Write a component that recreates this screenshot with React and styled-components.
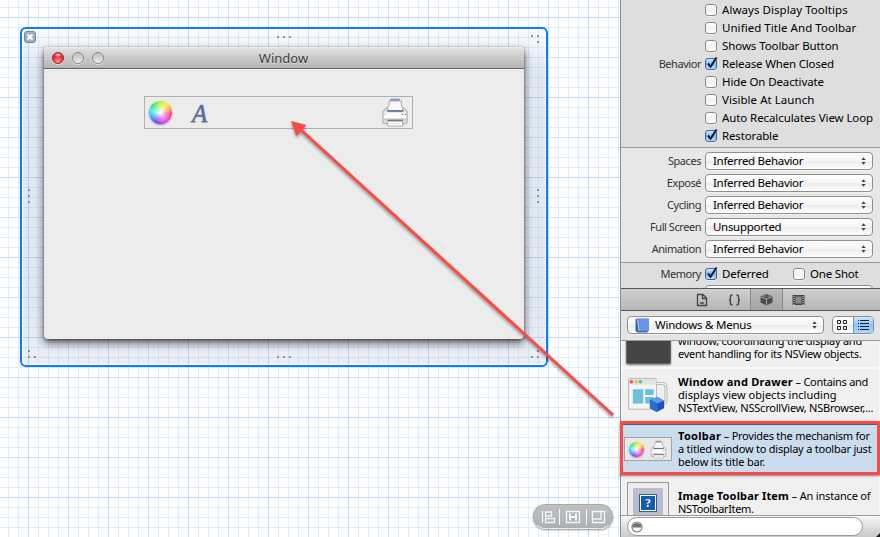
import React from "react";
import styled, { createGlobalStyle, css } from "styled-components";

const Global = createGlobalStyle`
  *, *::before, *::after { box-sizing: border-box; }
  body { margin: 0; overflow: hidden; font-family: "Noto Sans", "Open Sans", sans-serif; font-size: 11.5px; color: #000; }
  svg { display: block; flex: none; }
`;

const Screen = styled.div`
  position: relative;
  display: flex;
  width: 880px;
  height: 537px;
  overflow: hidden;
`;

/* ---------- canvas ---------- */
const Canvas = styled.main`
  position: relative;
  flex: 1;
  background-color: #fff;
  background-image:
    linear-gradient(90deg, #bdd9fc 1px, transparent 1px),
    linear-gradient(#bdd9fc 1px, transparent 1px),
    linear-gradient(90deg, #cde2fd 1px, transparent 1px),
    linear-gradient(#cde2fd 1px, transparent 1px),
    linear-gradient(90deg, #dfedfe 1px, transparent 1px),
    linear-gradient(#dfedfe 1px, transparent 1px);
  background-size: 80px 80px, 80px 80px, 40px 40px, 40px 40px, 10px 10px, 10px 10px;
  background-position: 28px 17px;
`;

const Selection = styled.section`
  position: absolute;
  left: 20px;
  top: 27px;
  width: 528px;
  height: 340px;
  border: 2px solid #0f78fb;
  border-radius: 6px;
  box-shadow: inset 0 0 0 1px #fff, 0 0 1px #8abcf5;
  background: linear-gradient(rgba(170, 190, 215, 0.05) 0, rgba(160, 180, 208, 0.3) 40px, rgba(160, 180, 208, 0.3) 270px, rgba(160, 175, 200, 0.2) 100%);
`;

const CloseBadge = styled.div`
  position: absolute;
  left: 2px;
  top: 2px;
  width: 12px;
  height: 12px;
  border: 1px solid #71849f;
  border-radius: 3px;
  background: #9fb0c9;
  display: grid;
  place-items: center;
`;

const Grip = styled.svg`
  position: absolute;
  left: ${(p) => p.$x}px;
  top: ${(p) => p.$y}px;
  fill: #858b94;
`;

const AppWindow = styled.div`
  position: absolute;
  left: 22px;
  top: 18px;
  width: 480px;
  height: 292px;
  display: flex;
  flex-direction: column;
  border-radius: 4px;
  background: #ececec;
  box-shadow: 0 4px 8px rgba(0, 0, 0, 0.62), 0 1px 3px rgba(0, 0, 0, 0.4);
`;

const TitleBar = styled.header`
  position: relative;
  display: flex;
  align-items: center;
  gap: 8px;
  height: 22px;
  padding: 0 8px;
  border-radius: 4px 4px 0 0;
  border-bottom: 1px solid #666;
  background: linear-gradient(#f1f1f1 0, #dedede 2px, #b4b4b4);
`;

const Light = styled.i`
  width: 12px;
  height: 12px;
  border-radius: 50%;
  border: 1px solid ${(p) => (p.$red ? "#9c2a31" : "#8b8b8b")};
  background: ${(p) =>
    p.$red
      ? "radial-gradient(ellipse 4px 2.3px at 50% 18%, #ffd7d9 0, transparent 100%), radial-gradient(circle at 50% 85%, #ff9aa0 0, #f2303c 50%, #c4101f 100%)"
      : "linear-gradient(#bfbfbf, #d2d2d2 45%, #ececec)"};
  box-shadow: 0 1px 0 rgba(255, 255, 255, 0.5);
`;

const Title = styled.h1`
  flex: 1;
  margin: 0 61px 0 0;
  text-align: center;
  font-size: 13px;
  font-weight: 400;
  line-height: 20px;
  color: #3d3d3d;
  text-shadow: 0 1px 0 rgba(255, 255, 255, 0.5);
`;

const ToolbarPreview = styled.div`
  display: flex;
  align-items: center;
  width: 269px;
  height: 33px;
  margin: 27px 0 0 100px;
  padding: 0 3px 0 4px;
  border: 1px solid #b0b0b0;
`;

const Wheel = styled.i`
  flex: none;
  width: ${(p) => p.$d}px;
  height: ${(p) => p.$d}px;
  border-radius: 50%;
  background:
    radial-gradient(circle, #fff 0, rgba(255, 255, 255, 0.62) 25%, rgba(255, 255, 255, 0) 66%),
    conic-gradient(#b8f53c, #ffee38 35deg, #ffab4a 65deg, #ff466b 95deg, #ff38cc 130deg, #df3cf8 165deg, #6b45f4 205deg, #3bb1fb 250deg, #35efe3 280deg, #37e768 315deg, #b8f53c);
  box-shadow: 0 1px 2px rgba(80, 80, 100, 0.5);
`;

const FontGlyph = styled.span`
  flex: 1;
  margin-left: 20px;
  padding-top: 2px;
  font: italic 400 25px/29px "Liberation Serif", serif;
  color: #5f6f9b;
  -webkit-text-stroke: 0.5px #5f6f9b;
  text-shadow: 0 1px 1px #bbb;
`;

const AlignBar = styled.nav`
  position: absolute;
  left: 533px;
  top: 504px;
  width: 80px;
  height: 25px;
  display: flex;
  align-items: center;
  justify-content: center;
  border: 1px solid #a4a9ae;
  border-bottom-color: #eee;
  border-radius: 13px;
  background: linear-gradient(rgba(184, 187, 190, 0.9), rgba(164, 168, 173, 0.9));
  box-shadow: 0 1px 2px rgba(0, 0, 0, 0.45);
`;

/* ---------- inspector ---------- */
const Panel = styled.aside`
  display: flex;
  flex-direction: column;
  width: 260px;
  border-left: 1px solid #8f8f8f;
  background: #dedede;
`;

const Group = styled.section`
  height: ${(p) => p.$h}px;
  padding-top: ${(p) => p.$pad || 0}px;
  background: ${(p) => (p.$light ? "#e7e7e7" : "#dedede")};
  border-top: ${(p) => (p.$first ? "none" : "1px solid #999")};
  overflow: hidden;
  flex: none;
`;

const Row = styled.div`
  display: grid;
  grid-template-columns: 80px 1fr;
  column-gap: 4px;
  align-items: center;
  height: ${(p) => p.$h}px;
  white-space: nowrap;
`;

const Label = styled.span`
  padding-bottom: 1px;
  text-align: right;
  color: #333;
  font-size: 11px;
  letter-spacing: -0.45px;
`;

const Options = styled.div`
  display: flex;
  align-items: center;
`;

const CheckLabel = styled.label`
  display: flex;
  align-items: center;
  gap: 5px;
  width: ${(p) => (p.$w ? p.$w + "px" : "auto")};
  letter-spacing: ${(p) => p.$ls || 0}px;
`;

const Caption = styled.span`
  line-height: 16px;
`;

const Box = styled.span`
  display: block;
  width: 12px;
  height: 12px;
  border: 1px solid ${(p) => (p.$on ? "#4e5d93" : "#8b8b8b")};
  border-radius: 3px;
  background: ${(p) => (p.$on ? "linear-gradient(#d3e8fb, #79b5ef 50%, #b3e1ff)" : "linear-gradient(#fff, #f1f1f1 50%, #fff)")};
  box-shadow: 0 1px 0 rgba(255, 255, 255, 0.4);
`;

const Tick = styled.svg`
  overflow: visible;
`;

const popup = css`
  display: flex;
  align-items: center;
  border: 1px solid #8f8f8f;
  border-radius: 4px;
  background: linear-gradient(#fff, #f6f6f6 50%, #ececec 52%, #fff);
  box-shadow: 0 1px 0 rgba(255, 255, 255, 0.5);
`;

const Select = styled.div`
  ${popup}
  width: 168px;
  height: 18px;
  padding: 0 6px 0 7px;
  letter-spacing: -0.3px;
  justify-content: space-between;
`;

const TabBar = styled.nav`
  display: grid;
  grid-template-columns: 32px 32px 32px 32px;
  justify-content: center;
  height: 23px;
  flex: none;
  border-top: 1px solid #555;
  border-bottom: 1px solid #555;
  background: linear-gradient(#d0d0d0, #b5b5b5);
`;

const Tab = styled.div`
  display: grid;
  place-items: center;
  border: solid ${(p) => (p.$active ? "#8a8a8a" : "transparent")};
  border-width: 0 1px;
  margin-left: -1px;
  background: ${(p) => (p.$active ? "linear-gradient(#bababa, #a5a5a5)" : "none")};
`;

const FilterBar = styled.div`
  display: flex;
  align-items: center;
  justify-content: space-between;
  height: 30px;
  flex: none;
  padding: 0 6px 1px;
  border-bottom: 1px solid #999;
  background: #e4e4e4;
`;

const Library = styled.div`
  ${popup}
  width: 197px;
  height: 18px;
  padding: 0 6px 0 7px;
  letter-spacing: -0.25px;
`;

const LibraryName = styled.span`
  flex: 1;
  margin-left: 5px;
  line-height: 15px;
  padding-bottom: 1px;
`;

const Segments = styled.div`
  ${popup}
  width: 42px;
  height: 18px;
  overflow: hidden;
`;

const Segment = styled.div`
  flex: 1;
  height: 16px;
  display: grid;
  place-items: center;
  background: ${(p) => (p.$on ? "linear-gradient(#d2e7fb, #8bc1f4 50%, #a9dafd)" : "none")};
  border-left: ${(p) => (p.$on ? "1px solid #7392bd" : "none")};
`;

const List = styled.div`
  display: flex;
  flex-direction: column;
  justify-content: flex-start;
  gap: 2px;
  height: 174px;
  flex: none;
  overflow: hidden;
  padding: 0 1px;
  background: #fafafa;
`;

const Item = styled.article`
  display: grid;
  grid-template-columns: 56px 1fr;
  align-items: start;
  height: 52px;
  flex: none;
  margin-top: ${(p) => p.$shift || 0}px;
  border-radius: 4px;
  background: ${(p) => (p.$selected ? "#ccdcef" : "#f0f0f0")};
`;

const Thumb = styled.div`
  display: flex;
  align-items: center;
  justify-content: center;
  height: 52px;
  padding-right: 4px;
`;

const Copy = styled.p`
  margin: 0;
  padding-top: ${(p) => p.$top || 6}px;
  font-size: 11px;
  line-height: 13px;
`;

const Line = styled.span`
  display: block;
  white-space: nowrap;
  letter-spacing: ${(p) => p.$ls || 0}px;

  b { letter-spacing: ${(p) => p.$bold || 0}px; }
`;

const MiniToolbar = styled.div`
  display: flex;
  align-items: center;
  justify-content: space-between;
  width: 48px;
  height: 24px;
  padding: 0 4px;
  border: 1px solid #a4a4a4;
  background: #e9e9e9;
`;

const DarkView = styled.div`
  width: 45px;
  height: 45px;
  border: 1px solid #666;
  border-radius: 2px;
  background: #444;
  box-shadow: 0 1px 2px #777;
`;

const ImageFrame = styled.div`
  flex: none;
  display: grid;
  place-items: center;
  width: 42px;
  height: 42px;
  border: 1px solid #999;
  background: #ededed;
`;

const ImageWell = styled.div`
  display: grid;
  place-items: center;
  width: 30px;
  height: 31px;
  background: #bcbcca;

  b {
    width: 16px;
    height: 16px;
    border: 1px solid #fff;
    outline: 1px solid #2663a8;
    background: #1459ab;
    color: #fff;
    font: bold 12px/14px "Liberation Serif", serif;
    text-align: center;
  }
`;

const SearchBar = styled.footer`
  position: relative;
  flex: 1;
  padding: 1px 6px;
  border-top: 1px solid #999;
  background: linear-gradient(#f8f8f8, #c9c9c9);
`;

const SearchField = styled.div`
  width: 236px;
  height: 19px;
  display: flex;
  align-items: center;
  padding-left: 3px;
  border: 1px solid #999;
  border-radius: 10px;
  background: #fff;
`;

const Highlight = styled.div`
  position: absolute;
  left: 620px;
  top: 421px;
  width: 260px;
  height: 54px;
  border: 3px solid #fb4b45;
  box-shadow: 0 1px 2px rgba(0, 0, 0, 0.5), inset 0 1px 0 #3f5f8f;
`;

const Arrow = styled.svg`
  position: absolute;
  left: 0;
  top: 0;
  filter: drop-shadow(0 2px 1.5px rgba(0, 0, 0, 0.4));
`;

const Corner = styled.svg`
  position: absolute;
  right: 0;
  bottom: 0;
`;

function Printer({ w, h }) {
  return (
    <svg width={w} height={h} viewBox="0 0 28 30">
      <path d="M9.500 1h9v3h-9z" fill="#8fa6cf" stroke="#7f93ba" strokeWidth=".7" />
      <path d="M4.500 10.500h19L26.500 14V25q0 1.500-1.500 1.500H3Q1.500 26.500 1.500 25V14z" fill="#dcdcdc" stroke="#a0a0a0" strokeWidth=".9" />
      <path d="M6.500 13V9.500L8 7.500V3H20.500V7.500L22 9.500V13z" fill="#f9f9f9" stroke="#909090" strokeWidth=".8" />
      <path d="M6 12.500h16.500v1.800H6z" fill="#637698" />
      <path d="M2.500 15h23v6h-23z" fill="#fbfbfb" />
      <path d="M2.500 21.500h23V23h-23z" fill="#c8c8c8" />
      <path d="M6.500 22.500h15.500V24H6.500z" fill="#707070" />
      <path d="M6.500 24h15.500v5H6.500z" fill="#fff" stroke="#999" strokeWidth=".8" />
      <path d="M8.500 26.500h11" stroke="#ccc" strokeWidth=".7" />
      <path d="M3 17h1.500" stroke="#e6b13a" />
      <path d="M21 17h1.500M24 17h1.500" stroke="#555" />
    </svg>
  );
}

function Chevrons() {
  return (
    <svg width="5" height="8" viewBox="0 0 5 8" fill="#444">
      <path d="M.3 3h4.400L2.500 .2zM.3 5h4.400L2.500 7.800z" />
    </svg>
  );
}

function Check({ on, w, ls, children }) {
  return (
    <CheckLabel $w={w} $ls={ls}>
      <Box $on={on}>
        {on && (
          <Tick width="10" height="10" viewBox="0 0 10 10">
            <path d="M2 4.500 4.500 7.800 10.500 -1.500" fill="none" stroke="#101b36" strokeWidth="2" />
          </Tick>
        )}
      </Box>
      <Caption>{children}</Caption>
    </CheckLabel>
  );
}

const dots = {
  h: [[0, 1], [6, 1], [12, 1]],
  v: [[1, 0], [1, 6], [1, 12]],
  tr: [[0, 0], [6, 0], [6, 6]],
  bl: [[0, 0], [0, 6], [6, 6]],
  br: [[6, 0], [0, 6], [6, 6]],
};

function Dots({ kind, x, y }) {
  return (
    <Grip $x={x} $y={y} width="15" height="15" viewBox="0 0 15 15">
      {dots[kind].map(([cx, cy]) => (
        <rect key={`${cx}-${cy}`} x={cx} y={cy} width="2" height="2" rx=".6" />
      ))}
    </Grip>
  );
}

const checks = [
  ["Always Display Tooltips", false, 0.05],
  ["Unified Title And Toolbar", false, 0.05],
  ["Shows Toolbar Button", false, -0.09],
  ["Release When Closed", true, -0.17],
  ["Hide On Deactivate", false, -0.12],
  ["Visible At Launch", false, 0.04],
  ["Auto Recalculates View Loop", false, -0.09],
  ["Restorable", true, -0.15],
];

const behaviors = [
  ["Spaces", "Inferred Behavior"],
  ["Exposé", "Inferred Behavior"],
  ["Cycling", "Inferred Behavior"],
  ["Full Screen", "Unsupported"],
  ["Animation", "Inferred Behavior"],
];

export default function App() {
  return (
    <Screen>
      <Global />
      <Canvas>
        <Selection>
          <CloseBadge>
            <svg width="8" height="8" viewBox="0 0 8 8">
              <path d="M1.500 1.500l5 5M6.500 1.500l-5 5" stroke="#fff" strokeWidth="2" />
            </svg>
          </CloseBadge>
          <Dots kind="h" x={255} y={6} />
          <Dots kind="h" x={255} y={326} />
          <Dots kind="v" x={5} y={160} />
          <Dots kind="v" x={514} y={160} />
          <Dots kind="tr" x={509} y={6} />
          <Dots kind="bl" x={6} y={321} />
          <Dots kind="br" x={509} y={321} />
          <AppWindow>
            <TitleBar>
              <Light $red />
              <Light />
              <Light />
              <Title>Window</Title>
            </TitleBar>
            <ToolbarPreview>
              <Wheel $d={23} />
              <FontGlyph>A</FontGlyph>
              <Printer w={28} h={29} />
            </ToolbarPreview>
          </AppWindow>
        </Selection>
        <AlignBar>
          <svg width="68" height="18" viewBox="0 0 68 18" fill="none" stroke="#f6f6f6" strokeWidth="1.300">
            <path d="M3.500 3v12M6.500 4h6v4h-6zM6.500 10.500h9v4h-9z" />
            <path d="M20.500 1v16M47.500 1v16" strokeWidth="1" />
            <path d="M27.500 3.500h13v11h-13z" />
            <path d="M31 5.500v7M37 5.500v7M31 9h6" strokeWidth="2" />
            <path d="M53.500 3.500h12v11h-12zM53.500 11h8.500V3.500" />
          </svg>
        </AlignBar>
      </Canvas>

      <Panel>
        <Group $first $h={147} $pad={1}>
          {checks.map(([text, on, ls], i) => (
            <Row key={text} $h={18}>
              <Label>{i === 3 ? "Behavior" : ""}</Label>
              <Check on={on} ls={ls}>{text}</Check>
            </Row>
          ))}
        </Group>
        <Group $light $h={115} $pad={2}>
          {behaviors.map(([label, value]) => (
            <Row key={label} $h={22}>
              <Label>{label}</Label>
              <Select>
                <Caption>{value}</Caption>
                <Chevrons />
              </Select>
            </Row>
          ))}
        </Group>
        <Group $h={26} $pad={2}>
          <Row $h={18}>
            <Label>Memory</Label>
            <Options>
              <Check on w={88} ls={-0.2}>Deferred</Check>
              <Check ls={-0.2}>One Shot</Check>
            </Options>
          </Row>
          <Row $h={22}>
            <Label />
            <Select />
          </Row>
        </Group>
        <TabBar>
          <Tab>
            <svg width="12" height="14" viewBox="0 0 12 14" fill="none" stroke="#444" strokeWidth="1.300">
              <path d="M1.500 1.500H7l3.500 3.500v7.500h-9zM6.500 2v3.500H10M4 10h4" />
            </svg>
          </Tab>
          <Tab>
            <svg width="13" height="12" viewBox="0 0 13 12" fill="none" stroke="#444" strokeWidth="1.400">
              <path d="M4.500 1Q2.500 1 2.500 2.500v2Q2.500 6 1 6q1.500 0 1.500 1.500v2Q2.500 11 4.500 11M8.500 1q2 0 2 1.500v2Q10.500 6 12 6q-1.500 0-1.500 1.500v2q0 1.500-2 1.500" />
            </svg>
          </Tab>
          <Tab $active>
            <svg width="13" height="13" viewBox="0 0 13 13">
              <path d="M.5 3.500 6.500 1l6 2.500v6l-6 3-6-3z" fill="#4c4c4c" />
              <path d="M.8 3.800 6.500 6l5.700-2.200M6.500 6v6" stroke="#a8a8a8" fill="none" />
              <path d="M2.500 3 5 2.200 7 3 4.500 3.800zM7 3l2-.6 2 .8-2 .7z" fill="#888" />
            </svg>
          </Tab>
          <Tab>
            <svg width="13" height="12" viewBox="0 0 13 12">
              <path d="M.5 1h12v10H.5z" fill="#444" />
              <path d="M3.500 2.500h6v7h-6z" fill="#8b8b8b" />
              <path d="M2 2v9M11 2v9" stroke="#ccc" strokeWidth="1.200" strokeDasharray="1 1" />
            </svg>
          </Tab>
        </TabBar>
        <FilterBar>
          <Library>
            <svg width="15" height="15" viewBox="0 0 15 15">
              <path d="M.5 1.500 2 .5h12v12l-2 2H2.500L.5 13z" fill="#3a62b8" />
              <path d="M2.500 1H14v12H4z" fill="#6793e8" />
              <path d="M2.500 1.500 4 13" stroke="#bdd0f6" fill="none" />
            </svg>
            <LibraryName>Windows &amp; Menus</LibraryName>
            <Chevrons />
          </Library>
          <Segments>
            <Segment>
              <svg width="11" height="11" viewBox="0 0 11 11" fill="none" stroke="#222">
                <path d="M.5 .5h3v3h-3zM6.500 .5h3v3h-3zM.5 6.500h3v3h-3zM6.500 6.500h3v3h-3z" />
              </svg>
            </Segment>
            <Segment $on>
              <svg width="11" height="11" viewBox="0 0 11 11" stroke="#122644">
                <path d="M0 .5h1M2 .5h9M0 3.500h1M2 3.500h9M0 6.500h1M2 6.500h9M0 9.500h1M2 9.500h9" />
              </svg>
            </Segment>
          </Segments>
        </FilterBar>
        <List>
          <Item $shift={-26}>
            <Thumb>
              <DarkView />
            </Thumb>
            <Copy $top={19}>
              <Line $ls={-0.25}>window, coordinating the display and</Line>
              <Line $ls={-0.28}>event handling for its NSView objects.</Line>
            </Copy>
          </Item>
          <Item>
            <Thumb>
              <svg width="42" height="36" viewBox="0 0 44 38">
                <path d="M30 7h7q4 0 4 4v13q0 4-4 4h-7" fill="none" stroke="#aaa" strokeWidth="3" />
                <path d="M30 7h7q4 0 4 4v13q0 4-4 4h-7" fill="none" stroke="#f7f7f7" strokeWidth="1.300" />
                <path d="M1.500 2.500q0-1 1-1H30q1 0 1 1V34h-29.500z" fill="#f5f5f5" stroke="#b4b4b4" />
                <path d="M2 2h29v6H2z" fill="#e2e2e2" />
                <circle cx="4.500" cy="5" r="1.900" fill="#ee5260" />
                <circle cx="9.500" cy="5" r="1.900" fill="#f2bd42" />
                <circle cx="14" cy="5" r="1.900" fill="#5cc86a" />
                <path d="M6 13h11v15H6zM19 13h9v6h-9zM19 21h9v7h-9z" fill="#6cc0dc" />
                <path d="m24 24 8-3 7 4v8l-8 4-7-4z" fill="#1c53b5" />
                <path d="m24 24 8-3 7 4-7 3z" fill="#5d99ec" />
                <path d="m24 24 8 4v9l-8-4z" fill="#2d6bce" />
              </svg>
            </Thumb>
            <Copy>
              <Line $bold={0.25} $ls={-0.28}><b>Window and Drawer</b> – Contains and</Line>
              <Line $ls={0.02}>displays view objects including</Line>
              <Line $ls={-0.22}>NSTextView, NSScrollView, NSBrowser,...</Line>
            </Copy>
          </Item>
          <Item $selected>
            <Thumb>
              <MiniToolbar>
                <Wheel $d={15} />
                <Printer w={17} h={19} />
              </MiniToolbar>
            </Thumb>
            <Copy>
              <Line $bold={0.3} $ls={-0.25}><b>Toolbar</b> – Provides the mechanism for</Line>
              <Line $ls={-0.22}>a titled window to display a toolbar just</Line>
              <Line $ls={-0.15}>below its title bar.</Line>
            </Copy>
          </Item>
          <Item>
            <Thumb>
              <ImageFrame>
                <ImageWell>
                  <b>?</b>
                </ImageWell>
              </ImageFrame>
            </Thumb>
            <Copy $top={12}>
              <Line $bold={0.15} $ls={-0.18}><b>Image Toolbar Item</b> – An instance of</Line>
              <Line $ls={-0.35}>NSToolbarItem.</Line>
            </Copy>
          </Item>
        </List>
        <SearchBar>
          <SearchField>
            <svg width="12" height="12" viewBox="0 0 12 12">
              <circle cx="6" cy="6" r="5" fill="#fff" stroke="#858585" strokeWidth="1.200" />
              <path d="M1.500 6.500h9a4.500 4.500 0 0 0-9 0z" fill="#727272" />
            </svg>
          </SearchField>
          <Corner width="4" height="4" viewBox="0 0 4 4">
            <path d="M4 0v4H0z" fill="#222" />
          </Corner>
        </SearchBar>
      </Panel>

      <Highlight />
      <Arrow width="880" height="537" viewBox="0 0 880 537">
        <path d="M613 415 300 129" stroke="#fb4b45" strokeWidth="3" fill="none" />
        <path d="M291 121l15.500 4-10 11z" fill="#fb4b45" />
      </Arrow>
    </Screen>
  );
}
